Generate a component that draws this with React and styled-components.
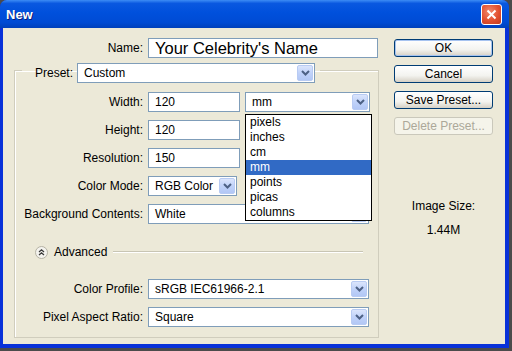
import React from 'react';
import styled, { createGlobalStyle } from 'styled-components';

const GlobalStyle = createGlobalStyle`
	html, body {
		margin: 0;
		padding: 0;
		background: #4b4b4b;
	}
	body {
		font-family: Tahoma, "Liberation Sans", Arial, sans-serif;
		font-size: 12px;
		color: #000;
	}
`;

const Window = styled.div`
	width: 509px;
	height: 348px;
	display: flex;
	flex-direction: column;
	background: #0831d9;
	border-radius: 7px 7px 0 0;
	overflow: hidden;
`;

const TitleBar = styled.div`
	height: 28px;
	flex: none;
	display: flex;
	align-items: center;
	justify-content: space-between;
	padding: 0 7px 0 6px;
	background: linear-gradient(
		to bottom,
		#3d8cf5 0%,
		#0a58e0 12%,
		#0050dc 45%,
		#004bd4 80%,
		#0040bb 100%
	);
`;

const Title = styled.span`
	color: #fff;
	font-family: "Liberation Sans", Arial, sans-serif;
	font-weight: bold;
	font-size: 13px;
	text-shadow: 1px 1px 0 #0a1e7a;
`;

const CloseButton = styled.div`
	width: 19px;
	height: 19px;
	border: 1px solid #fff;
	border-radius: 3px;
	background: radial-gradient(circle at 40% 35%, #f28a6e 0%, #e2502f 55%, #c33a1e 100%);
	display: flex;
	align-items: center;
	justify-content: center;
	margin-top: 1px;
`;

const Body = styled.div`
	flex: 1;
	margin: 0 4px 4px 3px;
	background: #ece9d8;
	display: flex;
	align-items: flex-start;
	padding-top: 10px;
`;

const Main = styled.div`
	width: 376px;
	display: flex;
	flex-direction: column;
`;

const Row = styled.div`
	display: flex;
	align-items: center;
	gap: 5px;
	height: 20px;
`;

const Label = styled.label`
	width: ${p => p.$w}px;
	flex: none;
	text-align: right;
	white-space: nowrap;
`;

const TextInput = styled.div`
	box-sizing: border-box;
	width: ${p => p.$w}px;
	height: 20px;
	border: 1px solid #7f9db9;
	background: #fff;
	display: flex;
	align-items: center;
	padding-left: 6px;
	font-size: ${p => (p.$big ? '16.5px' : '12px')};
	font-family: ${p => (p.$big ? '"Liberation Sans", Arial, sans-serif' : 'inherit')};
`;

const SelectBox = styled.div`
	position: relative;
	box-sizing: border-box;
	width: ${p => p.$w}px;
	height: 20px;
	border: 1px solid #7f9db9;
	background: #fff;
	display: flex;
	align-items: center;
	justify-content: space-between;
	padding: 0 1px 0 6px;
`;

const ArrowButton = styled.div`
	box-sizing: border-box;
	width: 16px;
	height: 16px;
	border: 1px solid #b8cbf3;
	border-radius: 2px;
	background: linear-gradient(to bottom, #dbe5fc 0%, #c0d2f9 50%, #b2c7f5 100%);
	display: flex;
	align-items: center;
	justify-content: center;
`;

const Fieldset = styled.fieldset`
	margin: 0 0 0 11px;
	padding: 9px 0 10px 0;
	width: 365px;
	box-sizing: border-box;
	border: 1px solid #d0cdbd;
	box-shadow: inset 1px 1px 0 #fff;
	display: flex;
	flex-direction: column;
	gap: 8px;
	min-width: 0;
`;

const Legend = styled.legend`
	margin-left: 7px;
	padding: 5px 5px 0 13px;
	display: flex;
	align-items: center;
	gap: 4px;
`;

const Advanced = styled.div`
	display: flex;
	align-items: center;
	height: 14px;
	margin: 13px 0 12px 20px;
	gap: 6px;
`;

const Rule = styled.div`
	flex: none;
	width: 250px;
	height: 1px;
	background: #c8c5b4;
	border-bottom: 1px solid #fff;
`;

const Menu = styled.ul`
	position: absolute;
	left: -1px;
	top: 21px;
	width: 125px;
	margin: 0;
	padding: 0;
	list-style: none;
	background: #fff;
	border: 1px solid #000;
	z-index: 2;
`;

const MenuItem = styled.li`
	height: 15px;
	line-height: 15px;
	padding-left: 4px;
	background: ${p => (p.$active ? '#316ac5' : 'transparent')};
	color: ${p => (p.$active ? '#fff' : '#000')};
`;

const Side = styled.div`
	margin-left: 15px;
	width: 99px;
	display: flex;
	flex-direction: column;
	align-items: center;
	padding-top: 1px;
`;

const Buttons = styled.div`
	display: flex;
	flex-direction: column;
	gap: 8px;
	width: 100%;
`;

const Button = styled.div`
	box-sizing: border-box;
	height: 18px;
	width: 100%;
	display: flex;
	align-items: center;
	justify-content: center;
	border: 1px solid ${p => (p.$disabled ? '#cac8bb' : '#003c74')};
	border-radius: 3px;
	color: ${p => (p.$disabled ? '#aca899' : '#000')};
	background: ${p =>
		p.$disabled
			? '#f5f4ea'
			: 'linear-gradient(to bottom, #ffffff 0%, #f3f3ef 60%, #d6d0c5 100%)'};
	box-shadow: ${p => (p.$default ? 'inset 0 0 0 1px #a6c3f0' : 'none')};
`;

const SizeInfo = styled.div`
	margin-top: 64px;
	display: flex;
	flex-direction: column;
	align-items: center;
	gap: 10px;
	font-size: 12px;
`;

const Chevron = () => (
	<svg width="9" height="6" viewBox="0 0 9 6">
		<path d="M1 1 L4.5 4.5 L8 1" fill="none" stroke="#4d6185" strokeWidth="2" />
	</svg>
);

const Select = ({ value, width, children }) => (
	<SelectBox $w={width}>
		<span>{value}</span>
		<ArrowButton>
			<Chevron />
		</ArrowButton>
		{children}
	</SelectBox>
);

const units = ['pixels', 'inches', 'cm', 'mm', 'points', 'picas', 'columns'];

const FieldRow = ({ label, children }) => (
	<Row>
		<Label $w={128}>{label}</Label>
		{children}
	</Row>
);

const App = () => (
	<>
		<GlobalStyle />
		<Window>
			<TitleBar>
				<Title>New</Title>
				<CloseButton>
					<svg width="11" height="11" viewBox="0 0 11 11">
						<path d="M1.5 1.5 L9.5 9.5 M9.5 1.5 L1.5 9.5" stroke="#fff" strokeWidth="2" />
					</svg>
				</CloseButton>
			</TitleBar>
			<Body>
				<Main>
					<Row>
						<Label $w={140}>Name:</Label>
						<TextInput $w={230} $big>Your Celebrity's Name</TextInput>
					</Row>
					<Fieldset>
						<Legend>
							<span>Preset:</span>
							<Select value="Custom" width={238} />
						</Legend>
						<FieldRow label="Width:">
							<TextInput $w={92}>120</TextInput>
							<Select value="mm" width={125}>
								<Menu>
									{units.map(u => (
										<MenuItem key={u} $active={u === 'mm'}>
											{u}
										</MenuItem>
									))}
								</Menu>
							</Select>
						</FieldRow>
						<FieldRow label="Height:">
							<TextInput $w={92}>120</TextInput>
						</FieldRow>
						<FieldRow label="Resolution:">
							<TextInput $w={92}>150</TextInput>
						</FieldRow>
						<FieldRow label="Color Mode:">
							<Select value="RGB Color" width={89} />
						</FieldRow>
						<FieldRow label="Background Contents:">
							<Select value="White" width={221} />
						</FieldRow>
						<Advanced>
							<svg width="13" height="13" viewBox="0 0 13 13">
								<circle cx="6.5" cy="6.5" r="6" fill="#f4f3ee" stroke="#b5b2a4" />
								<path d="M4 6 L6.5 3.8 L9 6 M4 9 L6.5 6.8 L9 9" fill="none" stroke="#3a3a3a" strokeWidth="1.3" />
							</svg>
							<span>Advanced</span>
							<Rule />
						</Advanced>
						<FieldRow label="Color Profile:">
							<Select value="sRGB IEC61966-2.1" width={221} />
						</FieldRow>
						<FieldRow label="Pixel Aspect Ratio:">
							<Select value="Square" width={221} />
						</FieldRow>
					</Fieldset>
				</Main>
				<Side>
					<Buttons>
						<Button $default>OK</Button>
						<Button>Cancel</Button>
						<Button>Save Preset...</Button>
						<Button $disabled>Delete Preset...</Button>
					</Buttons>
					<SizeInfo>
						<span>Image Size:</span>
						<span>1.44M</span>
					</SizeInfo>
				</Side>
			</Body>
		</Window>
	</>
);

export default App;
